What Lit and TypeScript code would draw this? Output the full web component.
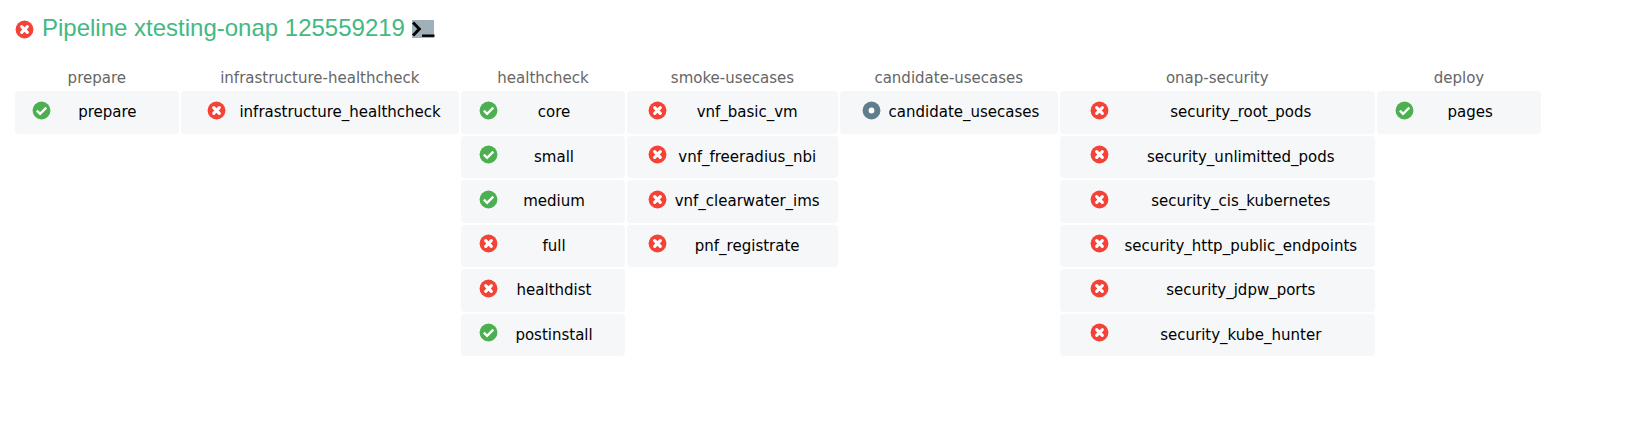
import { LitElement, html, css, svg } from "lit";
import { customElement } from "lit/decorators.js";

type Status = "success" | "failed" | "manual";
interface Stage { name: string; width: number; iconCell: number; jobs: [string, Status][]; }

const stages: Stage[] = [
  { name: "prepare", width: 163.6, iconCell: 21.2, jobs: [["prepare", "success"]] },
  { name: "infrastructure-healthcheck", width: 278.4, iconCell: 40.6, jobs: [["infrastructure_healthcheck", "failed"]] },
  { name: "healthcheck", width: 164, iconCell: 22.1, jobs: [["core", "success"], ["small", "success"], ["medium", "success"], ["full", "failed"], ["healthdist", "failed"], ["postinstall", "success"]] },
  { name: "smoke-usecases", width: 211, iconCell: 29.4, jobs: [["vnf_basic_vm", "failed"], ["vnf_freeradius_nbi", "failed"], ["vnf_clearwater_ims", "failed"], ["pnf_registrate", "failed"]] },
  { name: "candidate-usecases", width: 217.6, iconCell: 30.4, jobs: [["candidate_usecases", "manual"]] },
  { name: "onap-security", width: 315.4, iconCell: 47, jobs: [["security_root_pods", "failed"], ["security_unlimitted_pods", "failed"], ["security_cis_kubernetes", "failed"], ["security_http_public_endpoints", "failed"], ["security_jdpw_ports", "failed"], ["security_kube_hunter", "failed"]] },
  { name: "deploy", width: 164, iconCell: 22.2, jobs: [["pages", "success"]] },
];

const glyphs = {
  success: svg`<circle cx="12" cy="12" r="10.2" fill="#4caf50"/><path d="M6.7 12.2l3.7 3.6 7.1-7" fill="none" stroke="#fff" stroke-width="2.7"/>`,
  failed: svg`<circle cx="12" cy="12" r="10.2" fill="#f44336"/><path d="M8.8 8.8l6.4 6.4M15.2 8.8l-6.4 6.4" fill="none" stroke="#fff" stroke-width="3.6" stroke-linecap="round"/>`,
  manual: svg`<circle cx="12" cy="12" r="10.2" fill="#607d8b"/><circle cx="12" cy="12" r="3.3" fill="#fff"/>`,
};

@customElement("status-icon")
export class StatusIcon extends LitElement {
  static properties = { status: {} };
  declare status: Status;
  static styles = css`
    :host { display: block; width: 21px; height: 21px; }
    svg { display: block; }
  `;
  render() {
    return html`<svg width="21" height="21" viewBox="0 0 24 24">${glyphs[this.status]}</svg>`;
  }
}

@customElement("app-root")
export class AppRoot extends LitElement {
  static styles = css`
    :host { display: block; box-sizing: border-box; height: 432px; padding: 14px 0 0 15px; background: #fff; font-family: "DejaVu Sans", sans-serif; font-size: 15px; color: #000; }
    .title { display: flex; height: 28px; margin: 0; font: 400 24px/28px "Liberation Sans", sans-serif; color: #42b983; white-space: nowrap; }
    .title status-icon { margin: 5px 7px 0 -1px; }
    .terminal { display: block; margin: 6px 0 0 7px; }
    .board { display: flex; gap: 2px; padding-top: 25.3px; }
    .stage { flex: none; }
    .name { box-sizing: border-box; height: 24px; padding-top: 1px; line-height: 21px; text-align: center; color: #666; white-space: nowrap; }
    .jobs { display: flex; flex-direction: column; gap: 2px; }
    .job { display: flex; box-sizing: border-box; height: 42.5px; padding: 8.6px 16px 0; border-radius: 4px; background: #f6f7f9; }
    .mark { flex: none; display: flex; justify-content: center; }
    .label { flex: 1; min-width: 0; margin-top: 2.6px; line-height: 21px; text-align: center; white-space: nowrap; }
  `;
  render() {
    return html`
      <h1 class="title">
        <status-icon .status=${"failed"}></status-icon>
        <span>Pipeline xtesting-onap 125559219</span>
        <svg class="terminal" width="23" height="18" viewBox="0 0 23 18">
          <rect width="22" height="18" fill="#9fb0b9"/>
          <path d="M1 2.5L7.3 9 1 15.5" fill="none" stroke="#000" stroke-width="3"/>
          <path d="M10 15.7h12.5" stroke="#000" stroke-width="2.4"/>
        </svg>
      </h1>
      <div class="board">
        ${stages.map((s) => html`
          <section class="stage" style="width:${s.width}px">
            <div class="name">${s.name}</div>
            <div class="jobs">
              ${s.jobs.map(([name, status]) => html`
                <div class="job">
                  <div class="mark" style="width:${s.iconCell}px"><status-icon .status=${status}></status-icon></div>
                  <div class="label">${name}</div>
                </div>`)}
            </div>
          </section>`)}
      </div>`;
  }
}
